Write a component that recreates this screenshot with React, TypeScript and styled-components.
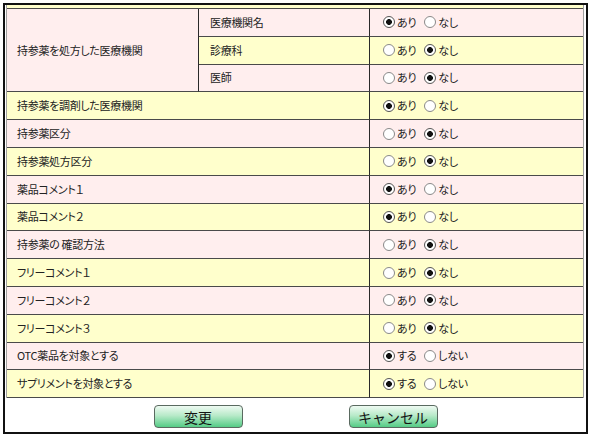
import React, { FC } from "react";
import styled, { createGlobalStyle } from "styled-components";

const GlobalStyle = createGlobalStyle`
  html, body {
    margin: 0;
    padding: 0;
    background: #ffffff;
  }
  body {
    font-family: "Noto Sans CJK JP", "DejaVu Sans", sans-serif;
    color: #222222;
  }
`;

const Frame = styled.div`
  box-sizing: border-box;
  margin: 3px 0 0 3px;
  width: 585px;
  height: 431px;
  border: 2px solid #111111;
  padding: 0 2px 0 1px;
  overflow: hidden;
`;

const SettingTable = styled.table`
  width: 578px;
  border-collapse: separate;
  border-spacing: 0;
  border-left: 1px solid #a0a0a0;
  border-right: 1px solid #a0a0a0;
  table-layout: fixed;
`;

type Tone = "pink" | "yellow";

const Cell = styled.td<{ $tone: Tone; $last?: boolean }>`
  box-sizing: border-box;
  height: 27.8px;
  padding: 0 0 0 10px;
  background: ${(p) => (p.$tone === "pink" ? "#ffeeee" : "#ffffcc")};
  border-bottom: 1px solid #4a4a4a;
  border-right: ${(p) => (p.$last ? "none" : "1px solid #2a2a2a")};
  font-size: 11px;
  letter-spacing: -0.3px;
  line-height: 1;
  font-feature-settings: "palt";
  vertical-align: middle;
  white-space: nowrap;
`;

const SubCell = styled(Cell)`
  padding-left: 11px;
`;

const ChoiceCell = styled(Cell)`
  padding-left: 13px;
`;

const EdgeCell = styled.td`
  box-sizing: border-box;
  height: 4px;
  padding: 0;
  background: #ffffcc;
  border-bottom: 1px solid #4a4a4a;
`;

const Choices = styled.div`
  display: flex;
  align-items: center;
  gap: 8px;
`;

const Choice = styled.span`
  display: inline-flex;
  align-items: center;
  gap: 2px;
`;

const Radio = styled.span<{ $checked: boolean }>`
  box-sizing: border-box;
  width: 12px;
  height: 12px;
  border-radius: 50%;
  border: 1px solid ${(p) => (p.$checked ? "#555555" : "#8a8a8a")};
  background: radial-gradient(
    circle,
    ${(p) => (p.$checked ? "#111111 0, #111111 2.6px, #ffffff 3.2px" : "#ffffff 0")},
    #ffffff 100%
  );
`;

const ButtonBar = styled.div`
  display: flex;
  justify-content: center;
  gap: 106px;
  margin-top: 7px;
  padding-left: 1px;
`;

const ActionButton = styled.button`
  box-sizing: border-box;
  width: 89px;
  height: 23px;
  border: 1px solid #5a6a60;
  border-radius: 4px;
  background: linear-gradient(to bottom, #eefaf2 0%, #b8eac9 45%, #55cc86 100%);
  font-family: "Noto Sans CJK JP", sans-serif;
  font-size: 14px;
  color: #141414;
  padding: 0;
  line-height: 1;
`;

interface ChoiceProps {
  tone: Tone;
  yes: string;
  no: string;
  picked: boolean;
}

const ChoiceGroup: FC<ChoiceProps> = ({ tone, yes, no, picked }) => (
  <ChoiceCell $tone={tone} $last>
    <Choices>
      <Choice>
        <Radio $checked={picked} />
        {yes}
      </Choice>
      <Choice>
        <Radio $checked={!picked} />
        {no}
      </Choice>
    </Choices>
  </ChoiceCell>
);

const subRows: { label: string; tone: Tone; on: boolean }[] = [
  { label: "医療機関名", tone: "pink", on: true },
  { label: "診療科", tone: "yellow", on: false },
  { label: "医師", tone: "pink", on: false },
];

const rows: { label: string; on: boolean; yes?: string; no?: string }[] = [
  { label: "持参薬を調剤した医療機関", on: true },
  { label: "持参薬区分", on: false },
  { label: "持参薬処方区分", on: false },
  { label: "薬品コメント１", on: true },
  { label: "薬品コメント２", on: true },
  { label: "持参薬の 確認方法", on: false },
  { label: "フリーコメント１", on: false },
  { label: "フリーコメント２", on: false },
  { label: "フリーコメント３", on: false },
  { label: "OTC薬品を対象とする", on: true, yes: "する", no: "しない" },
  { label: "サプリメントを対象とする", on: true, yes: "する", no: "しない" },
];

const App: FC = () => {
  return (
    <>
      <GlobalStyle />
      <Frame>
        <SettingTable>
          <colgroup>
            <col style={{ width: 192 }} />
            <col style={{ width: 171 }} />
            <col />
          </colgroup>
          <tbody>
            <tr>
              <EdgeCell colSpan={3} />
            </tr>
            {subRows.map((r, i) => (
              <tr key={r.label}>
                {i === 0 && (
                  <Cell $tone="pink" rowSpan={3}>
                    持参薬を処方した医療機関
                  </Cell>
                )}
                <SubCell $tone={r.tone}>{r.label}</SubCell>
                <ChoiceGroup tone={r.tone} yes="あり" no="なし" picked={r.on} />
              </tr>
            ))}
            {rows.map((r, i) => {
              const tone: Tone = i % 2 === 0 ? "yellow" : "pink";
              return (
                <tr key={r.label}>
                  <Cell $tone={tone} colSpan={2}>
                    {r.label}
                  </Cell>
                  <ChoiceGroup
                    tone={tone}
                    yes={r.yes ?? "あり"}
                    no={r.no ?? "なし"}
                    picked={r.on}
                  />
                </tr>
              );
            })}
          </tbody>
        </SettingTable>
        <ButtonBar>
          <ActionButton>変更</ActionButton>
          <ActionButton>キャンセル</ActionButton>
        </ButtonBar>
      </Frame>
    </>
  );
};

export default App;
